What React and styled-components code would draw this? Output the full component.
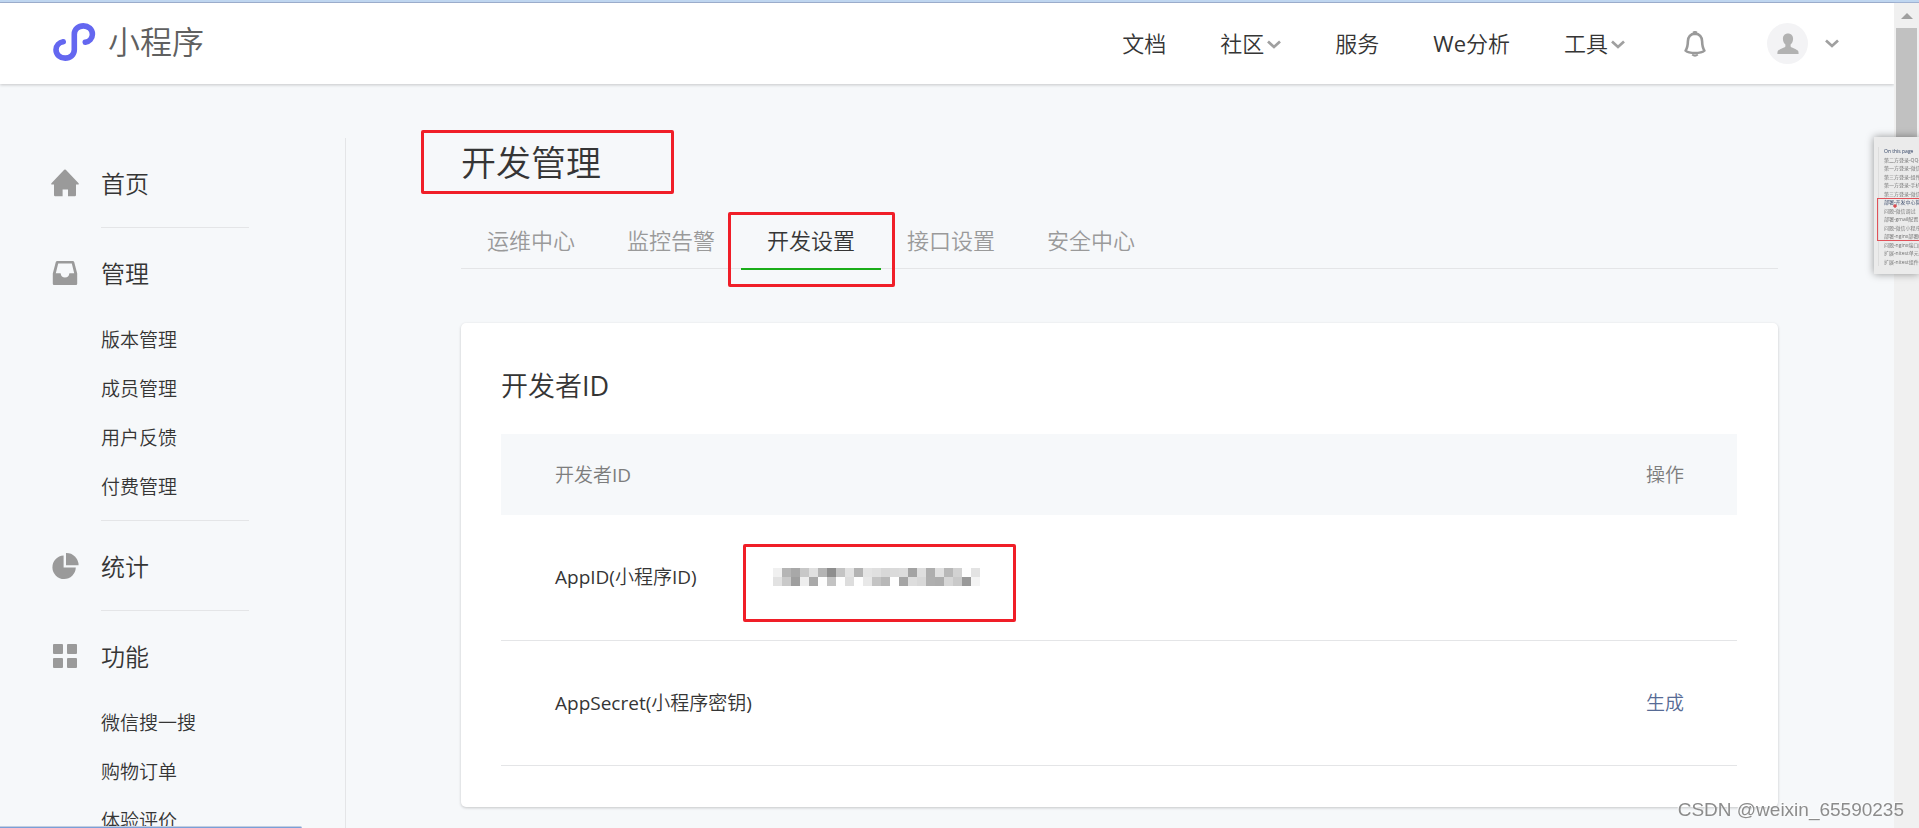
import React from "react";
import styled, { createGlobalStyle } from "styled-components";

const GlobalStyle = createGlobalStyle`
  * {
    box-sizing: border-box;
  }
  body {
    margin: 0;
    font-family: "Open Sans", "Noto Sans CJK SC DemiLight", "Noto Sans CJK SC", sans-serif;
    font-weight: 400;
    color: #353535;
    background-color: #f6f8fa;
  }
  h1, h2, ul, p {
    margin: 0;
    padding: 0;
    font-weight: 400;
  }
  ul {
    list-style: none;
  }
  a {
    color: inherit;
    text-decoration: none;
  }
  button {
    font: inherit;
    color: inherit;
    background: none;
    border: 0;
    padding: 0;
    cursor: pointer;
  }
`;

const Window = styled.div`
  display: flex;
  height: 100vh;
  overflow: hidden;
  padding-top: 1px;
  border-top: 2px solid #bfd6f0;
  background-color: #a0b2d2;
`;
const Page = styled.div`
  flex: 1;
  min-width: 0;
  background-color: #f6f8fa;
`;
const Header = styled.header`
  display: flex;
  align-items: center;
  justify-content: space-between;
  height: 81px;
  padding: 0 55px 0 53px;
  background-color: #ffffff;
  box-shadow: 0 1px 3px rgba(0, 0, 0, 0.2);
`;
const Brand = styled.a`
  display: flex;
  align-items: center;
  gap: 12px;
  padding-bottom: 3px;
  font-size: 32px;
  line-height: 40px;
  color: #606060;
`;
const Nav = styled.nav`
  display: flex;
  align-items: center;
  gap: 54px;
  font-size: 22px;
  line-height: 32px;
`;
const NavLink = styled.a`
  display: flex;
  align-items: center;
  gap: 3px;
  padding-bottom: 2px;

  svg {
    margin-top: 4px;
  }
`;
const BellButton = styled.button`
  display: flex;
  margin: 0 7px 0 5px;
`;
const Account = styled.button`
  display: flex;
  align-items: center;
  gap: 17px;
`;
const Avatar = styled.span`
  display: flex;
  align-items: center;
  justify-content: center;
  width: 41px;
  height: 41px;
  border-radius: 50%;
  background-color: #f3f3f5;
`;

const Body = styled.div`
  display: flex;
  align-items: flex-start;
`;
const Sidebar = styled.aside`
  flex: none;
  width: 346px;
  margin-top: 54px;
  padding-left: 51px;
  border-right: 1px solid #e4e5e7;
`;
const Group = styled.section`
  display: grid;
  grid-template-columns: 28px 148px;
  column-gap: 22px;
`;
const GroupIcon = styled.span`
  display: flex;
  align-items: center;
  justify-content: center;
  height: 28px;
  margin-top: 31px;
`;
const GroupBody = styled.div`
  padding: 32px 0 ${(props) => (props.$open ? "8px" : "29px")};
  border-bottom: 1px solid #e4e5e7;
`;
const GroupTitle = styled.a`
  display: block;
  font-size: 24px;
  line-height: 28px;
`;
const SubList = styled.ul`
  margin-top: 28px;
  font-size: 19px;
  line-height: 49px;
`;

const Main = styled.main`
  flex: 1;
  min-width: 0;
  padding: 46px 116px 0 115px;
`;
const Title = styled.h1`
  position: relative;
  width: fit-content;
  padding-top: 1px;
  font-size: 35px;
  line-height: 64px;
`;
// red pen mark drawn round the thing to look at
const Mark = styled.span`
  position: absolute;
  top: ${(props) => props.$top}px;
  left: ${(props) => props.$left}px;
  width: ${(props) => props.$width}px;
  height: ${(props) => props.$height}px;
  border: 3px solid #f01e28;
  border-radius: 2px;
  pointer-events: none;
`;
const Tabs = styled.div`
  display: flex;
  margin-top: 17px;
  border-bottom: 1px solid #e4e5e7;
`;
const Tab = styled.button`
  position: relative;
  width: 140px;
  height: 58px;
  margin-bottom: -2px;
  font-size: 22px;
  line-height: 56px;
  color: ${(props) => (props.$active ? "#353535" : "#9a9a9a")};
  border-bottom: 2px solid ${(props) => (props.$active ? "#1aad19" : "transparent")};
`;
const Card = styled.section`
  margin-top: 54px;
  padding: 41px 41px 41px 40px;
  background-color: #ffffff;
  border-radius: 5px;
  box-shadow: 0 1px 3px rgba(0, 0, 0, 0.2);
`;
const CardTitle = styled.h2`
  font-size: 27px;
  line-height: 44px;
`;
const Table = styled.table`
  width: 100%;
  margin-top: 26px;
  border-collapse: collapse;
  table-layout: fixed;
  font-size: 19px;
  line-height: 28px;
  text-align: left;

  th {
    height: 81px;
    padding: 0;
    font-weight: 400;
    color: #7d7d7d;
    background-color: #f6f8fa;
  }
  td {
    height: 125px;
    padding: 0;
    border-bottom: 1px solid #e4e5e7;
  }
  th:first-child,
  td:first-child {
    width: 272px;
    padding-left: 54px;
  }
  th:last-child,
  td:last-child {
    width: 160px;
    padding-right: 53px;
    text-align: right;
  }
`;
const Masked = styled.span`
  position: relative;
  display: block;
  width: fit-content;

  svg {
    display: block;
  }
`;
const ActionLink = styled.a`
  color: #576b95;
`;

const ScrollBar = styled.div`
  display: flex;
  flex-direction: column;
  align-items: center;
  width: 25px;
  background-color: #f0f0f0;
`;
const ScrollArrow = styled.span`
  margin: 10px 0 9px;
  border: 6px solid transparent;
  border-top: 0;
  border-bottom-color: #a0a0a0;
`;
const ScrollThumb = styled.span`
  width: 21px;
  height: 160px;
  background-color: #c1c1c1;
`;

const Outline = styled.aside`
  position: fixed;
  top: 137px;
  right: 0;
  width: 45px;
  height: 137px;
  padding: 10px 0 8px 4px;
  overflow: hidden;
  background-color: #ebebeb;
  box-shadow: 0 0 8px rgba(0, 0, 0, 0.4);
`;
const OutlineList = styled.ul`
  display: flex;
  flex-direction: column;
  justify-content: space-between;
  height: 100%;
  padding-left: 5px;
  border-left: 1px solid #dddddd;
  font-size: 5px;
  line-height: 8px;
  white-space: nowrap;
`;
const OutlineItem = styled.li`
  color: ${(props) => (props.$strong ? "#2c3e60" : "#707070")};
`;
const OutlineMark = styled.span`
  position: absolute;
  top: 61px;
  left: 3px;
  width: 60px;
  height: 43px;
  border: 1px solid #e0525a;
`;
const Cursor = styled.svg`
  position: absolute;
  top: 67px;
  left: 19px;
`;

const StatusEdge = styled.div`
  position: fixed;
  left: 0;
  bottom: 0;
  width: 302px;
  height: 2px;
  border-top: 1px solid #c3cfe0;
  border-top-right-radius: 2px;
  background-color: #7b9fd8;
`;
const Watermark = styled.p`
  position: fixed;
  right: 15px;
  bottom: 6px;
  font-family: "Liberation Sans", sans-serif;
  font-size: 19px;
  line-height: 24px;
  color: #8c8c8c;
  text-shadow: -1px -1px 0 rgba(255, 255, 255, 0.8);
`;

const Logo = () => (
  <svg width="43" height="38" viewBox="0 0 43 38" fill="none" aria-hidden="true">
    <path
      d="M32.3 19.2C36.2 18.6 39.4 15.4 39.4 11.2C39.4 6.3 35.3 2.9 30.4 2.9C25.4 2.9 21.3 6.3 21.3 11.2V26.8C21.3 31.7 17.2 35.1 12.2 35.1C7.2 35.1 3 31.7 3 26.8C3 22.6 6.3 19.4 10.2 18.8"
      stroke="#6467f0"
      strokeWidth="5.6"
      strokeLinecap="round"
    />
  </svg>
);
const Chevron = () => (
  <svg width="14" height="9" viewBox="0 0 14 9" fill="none" aria-hidden="true">
    <path d="M1 1.5L7 7L13 1.5" stroke="#a0a0a0" strokeWidth="2.7" />
  </svg>
);
const BellIcon = () => (
  <svg width="22" height="26" viewBox="0 0 22 26" fill="none" stroke="#9a9a9a" aria-hidden="true">
    <path
      d="M11 2.6C6.5 2.8 4 6 3.9 10.2C3.8 14.6 3.2 17.2 1.6 19.6C3.6 21.4 7 22 11 22S18.4 21.4 20.4 19.6C18.8 17.2 18.2 14.6 18.1 10.2C18 6 15.5 2.8 11 2.6Z"
      strokeWidth="2.6"
      strokeLinejoin="round"
    />
    <path d="M9 1.8Q11 0.2 13 1.8M8.2 23.4Q11 25.8 13.8 23.4" strokeWidth="2" />
  </svg>
);
const UserIcon = () => (
  <svg width="22" height="22" viewBox="0 0 22 22" fill="#b2b2b2" aria-hidden="true">
    <path d="M11 0.5C7.9 0.5 5.9 2.6 5.9 5.8C5.9 8.4 7 10.4 8.4 11.6V13.4C7.6 14.6 3.4 15.8 1.2 17.4C0.5 18 0.4 19.6 0.4 21H21.6C21.6 19.6 21.5 18 20.8 17.4C18.6 15.8 14.4 14.6 13.6 13.4V11.6C15 10.4 16.1 8.4 16.1 5.8C16.1 2.6 14.1 0.5 11 0.5Z" />
  </svg>
);
const HomeIcon = () => (
  <svg width="28" height="28" viewBox="0 0 28 28" fill="#9a9a9a" aria-hidden="true">
    <path d="M13.2 0.8Q14 0.2 14.8 0.8L27.6 14.2Q28.2 15.6 27 15.6H25V26Q25 27.2 23.8 27.2H17V20.6H11.6V27.2H4.2Q3 27.2 3 26V15.6H1Q-0.2 15.6 0.4 14.2Z" />
  </svg>
);
const TrayIcon = () => (
  <svg width="26" height="26" viewBox="0 0 26 26" fill="#9a9a9a" aria-hidden="true">
    <path
      fillRule="evenodd"
      d="M5.2 1H20.8Q21.8 1 22.2 2L25.2 13.4V23.8Q25.2 25 24 25H2Q0.8 25 0.8 23.8V13.4L3.8 2Q4.2 1 5.2 1ZM6.2 3.4L3.8 13.2H8.6Q9.2 17.6 13 17.6T17.4 13.2H22.2L19.8 3.4Z"
    />
  </svg>
);
const PieIcon = () => (
  <svg width="28" height="28" viewBox="0 0 28 28" fill="#9a9a9a" aria-hidden="true">
    <path d="M12.6 3.6V15.6H24.8A11.7 11.7 0 1 1 12.6 3.6Z" />
    <path d="M15 1A12.2 12.2 0 0 1 27.6 13.2H15Z" />
  </svg>
);
const GridIcon = () => (
  <svg width="24" height="24" viewBox="0 0 24 24" fill="#9a9a9a" aria-hidden="true">
    <rect x="0" y="0" width="10" height="10" rx="1" />
    <rect x="14" y="0" width="10" height="10" rx="1" />
    <rect x="0" y="14" width="10" height="10" rx="1" />
    <rect x="14" y="14" width="10" height="10" rx="1" />
  </svg>
);

const groups = [
  { title: "首页", icon: HomeIcon, items: [] },
  { title: "管理", icon: TrayIcon, items: ["版本管理", "成员管理", "用户反馈", "付费管理"] },
  { title: "统计", icon: PieIcon, items: [] },
  { title: "功能", icon: GridIcon, items: ["微信搜一搜", "购物订单", "体验评价"] },
];

const navLinks = [
  { label: "文档" },
  { label: "社区", menu: true },
  { label: "服务" },
  { label: "We分析" },
  { label: "工具", menu: true },
];

const tabs = ["运维中心", "监控告警", "开发设置", "接口设置", "安全中心"];

// grey levels of the masked id, one pair of hex digits for each block
const mosaic = [
  "f0 b5 a8 c8 e0 b4 8e c4 e2 b3 e4 e0 d8 da dc a3 de ae e0 b8 d2 fe e3",
  "e2 c9 9f ee a9 fd c3 fe dd fe e8 c4 b8 fe a5 dd d8 af ad d6 c9 99 f4",
];

const outline = [
  "On this page",
  "第二方登录-QQ登录",
  "第一方登录-微信QQ",
  "第三方登录-组件使用",
  "第一方登录-手机登录",
  "第三方登录-微信绑定",
  "部署-开发中心管理",
  "问题-微信调试",
  "部署-gmail配置（邮",
  "问题-微信小程序",
  "部署-nginx部署(腾讯",
  "问题-nginx端口配置",
  "扩展-nitest单元测试",
  "扩展-nitest组件测试",
];

const Mosaic = () => (
  <svg width="207" height="18" role="img" aria-label="AppID">
    {mosaic.map((row, y) =>
      row.split(" ").map((level, x) => (
        <rect
          key={`${x}-${y}`}
          x={x * 9}
          y={y * 9}
          width="9"
          height="9"
          fill={`#${level}${level}${level}`}
        />
      ))
    )}
  </svg>
);

export default function App() {
  return (
    <>
      <GlobalStyle />
      <Window>
        <Page>
          <Header>
            <Brand href="#">
              <Logo />
              小程序
            </Brand>
            <Nav>
              {navLinks.map(({ label, menu }) => (
                <NavLink href="#" key={label}>
                  {label}
                  {menu && <Chevron />}
                </NavLink>
              ))}
              <BellButton aria-label="通知">
                <BellIcon />
              </BellButton>
              <Account aria-label="账号">
                <Avatar>
                  <UserIcon />
                </Avatar>
                <Chevron />
              </Account>
            </Nav>
          </Header>
          <Body>
            <Sidebar>
              {groups.map(({ title, icon: Icon, items }) => (
                <Group key={title}>
                  <GroupIcon>
                    <Icon />
                  </GroupIcon>
                  <GroupBody $open={items.length > 0}>
                    <GroupTitle href="#">{title}</GroupTitle>
                    {items.length > 0 && (
                      <SubList>
                        {items.map((item) => (
                          <li key={item}>
                            <a href="#">{item}</a>
                          </li>
                        ))}
                      </SubList>
                    )}
                  </GroupBody>
                </Group>
              ))}
            </Sidebar>
            <Main>
              <Title>
                开发管理
                <Mark $top={0} $left={-40} $width={253} $height={64} />
              </Title>
              <Tabs role="tablist">
                {tabs.map((tab) => {
                  const active = tab === "开发设置";
                  return (
                    <Tab key={tab} role="tab" aria-selected={active} $active={active}>
                      {tab}
                      {active && <Mark $top={0} $left={-13} $width={167} $height={75} />}
                    </Tab>
                  );
                })}
              </Tabs>
              <Card>
                <CardTitle>开发者ID</CardTitle>
                <Table>
                  <thead>
                    <tr>
                      <th>开发者ID</th>
                      <th></th>
                      <th>操作</th>
                    </tr>
                  </thead>
                  <tbody>
                    <tr>
                      <td>AppID(小程序ID)</td>
                      <td>
                        <Masked>
                          <Mosaic />
                          <Mark $top={-24} $left={-30} $width={273} $height={78} />
                        </Masked>
                      </td>
                      <td></td>
                    </tr>
                    <tr>
                      <td>AppSecret(小程序密钥)</td>
                      <td></td>
                      <td>
                        <ActionLink href="#">生成</ActionLink>
                      </td>
                    </tr>
                  </tbody>
                </Table>
              </Card>
            </Main>
          </Body>
        </Page>
        <ScrollBar>
          <ScrollArrow />
          <ScrollThumb />
        </ScrollBar>
      </Window>
      <Outline>
        <OutlineList>
          {outline.map((item, i) => (
            <OutlineItem key={item} $strong={i === 0 || i === 6}>
              {item}
            </OutlineItem>
          ))}
        </OutlineList>
        <OutlineMark />
        <Cursor width="4" height="4" viewBox="0 0 4 4">
          <path d="M2 0V4M0 2H4" stroke="#d01820" />
        </Cursor>
      </Outline>
      <StatusEdge />
      <Watermark>CSDN @weixin_65590235</Watermark>
    </>
  );
}
